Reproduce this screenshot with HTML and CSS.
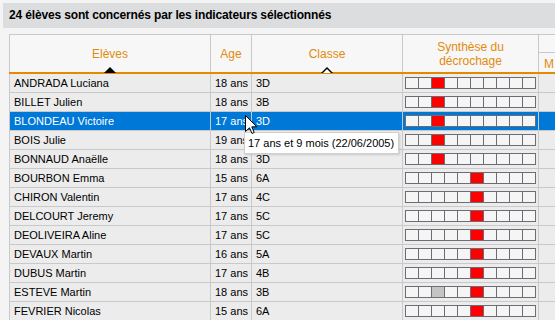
FILE: index.html
```html
<!DOCTYPE html>
<html lang="fr">
<head>
    <meta charset="UTF-8">
    <title>Synthèse du décrochage</title>
    <link rel="stylesheet" href="styles.css">
</head>
<body>

<div class="title-bar">24 élèves sont concernés par les indicateurs sélectionnés</div>

<table class="eleves">
    <colgroup>
        <col class="c-nom">
        <col class="c-age">
        <col class="c-classe">
        <col class="c-synthese">
        <col class="c-suite">
    </colgroup>
    <thead>
        <tr class="head-1">
            <th rowspan="2" class="sorted">Elèves<span class="tri tri-actif"></span></th>
            <th rowspan="2">Age</th>
            <th rowspan="2" class="sorted">Classe<span class="tri"></span></th>
            <th rowspan="2">Synthèse du<br>décrochage</th>
            <th class="groupe"></th>
        </tr>
        <tr class="head-2">
            <th class="sous">M</th>
        </tr>
    </thead>
    <tbody id="table-body"></tbody>
</table>

<div class="tooltip">17 ans et 9 mois (22/06/2005)</div>

<svg class="cursor" width="13" height="20" viewBox="0 0 13 20">
    <path d="M0.5 0.5 V16.5 L4.5 12.8 L7 18.5 L9.2 17.5 L6.8 11.8 H11.8 Z" fill="#fff" stroke="#000" stroke-width="1" stroke-linejoin="miter"/>
</svg>

<script>
// nom, age, classe, case rouge, case grise
const eleves = [
    ['ANDRADA Luciana', 18, '3D', 2],
    ['BILLET Julien', 18, '3B', 2],
    ['BLONDEAU Victoire', 17, '3D', 2],
    ['BOIS Julie', 19, '3D', 2],
    ['BONNAUD Anaëlle', 18, '3D', 2],
    ['BOURBON Emma', 15, '6A', 5],
    ['CHIRON Valentin', 17, '4C', 5],
    ['DELCOURT Jeremy', 17, '5C', 5],
    ['DEOLIVEIRA Aline', 17, '5C', 5],
    ['DEVAUX Martin', 16, '5A', 5],
    ['DUBUS Martin', 17, '4B', 5],
    ['ESTEVE Martin', 18, '3B', 5, 2],
    ['FEVRIER Nicolas', 15, '6A', 5]
];

const tbody = document.getElementById('table-body');
eleves.forEach((e, i) => {
    let cases = '';
    for (let k = 0; k < 10; k++) {
        let cls = 'case';
        if (k === e[3]) cls += ' rouge';
        else if (k === e[4]) cls += ' grise';
        cases += `<span class="${cls}"></span>`;
    }
    const tr = document.createElement('tr');
    if (i === 2) tr.className = 'selected';
    tr.innerHTML = `
        <td class="nom">${e[0]}</td>
        <td>${e[1]} ans</td>
        <td>${e[2]}</td>
        <td class="synthese"><span class="barre">${cases}</span></td>
        <td></td>
    `;
    tbody.appendChild(tr);
});
</script>

</body>
</html>
```

FILE: styles.css
```css
html, body {
    margin: 0;
    overflow: hidden;
}

body {
    background-color: #f4f4f4;
    font-family: "Liberation Sans", Arial, sans-serif;
    color: #000;
}

/* bandeau du haut */
.title-bar {
    margin: 3px 0 0 3px;
    height: 25px;
    line-height: 25px;
    padding-left: 6px;
    background-color: #dcdddf;
    font-size: 12px;
    font-weight: bold;
    letter-spacing: -0.15px;
}

/* tableau des élèves */
.eleves {
    margin: 6px 0 0 9px;
    border-collapse: collapse;
    table-layout: fixed;
    width: 640px;
    border: 1px solid #c9c9c9;
}

.c-nom { width: 201px; }
.c-age { width: 41px; }
.c-classe { width: 151px; }
.c-synthese { width: 136px; }
.c-suite { width: 111px; }

th {
    position: relative;
    background-color: #f7f7f7;
    color: #e38a0c;
    font-weight: normal;
    font-size: 12px;
    line-height: 14px;
    border: 1px solid #c9c9c9;
    border-bottom: 2px solid #e38a00;
    padding: 0;
}

.head-1 th { height: 17px; }
.head-2 th { height: 17px; }

th.groupe {
    border-bottom: 1px solid #c9c9c9;
}

th.sous {
    text-align: left;
    padding-left: 5px;
    padding-top: 2px;
}

/* triangles de tri */
.tri {
    position: absolute;
    left: 50%;
    bottom: -1px;
    margin-left: -6px;
    width: 0;
    height: 0;
    border-left: 6px solid transparent;
    border-right: 6px solid transparent;
    border-bottom: 6px solid #000;
}

.tri::after {
    content: "";
    position: absolute;
    left: -4px;
    top: 1.5px;
    border-left: 4px solid transparent;
    border-right: 4px solid transparent;
    border-bottom: 4px solid #fff;
}

.tri-actif::after {
    display: none;
}

td {
    background-color: #ececec;
    border: 1px solid #c9c9c9;
    font-size: 11px;
    height: 18px;
    line-height: 18px;
    padding: 0 4px;
    white-space: nowrap;
    overflow: hidden;
}

.selected td {
    background-color: #0078d7;
    color: #fff;
}

td.synthese {
    padding: 0 0 0 2px;
}

/* barre de synthèse */
.barre {
    display: inline-flex;
    vertical-align: middle;
    border-left: 1px solid #6c6c74;
    margin-top: -2px;
}

.case {
    width: 12px;
    height: 10px;
    border: 1px solid #6c6c74;
    border-left: none;
    background-color: #f5f5f5;
}

.case.rouge { background-color: #ff0000; }
.case.grise { background-color: #c4c4c4; }

/* infobulle */
.tooltip {
    position: absolute;
    left: 244px;
    top: 132px;
    width: 150px;
    height: 20px;
    line-height: 20px;
    padding-left: 3px;
    background-color: #fff;
    border: 1px solid #cfcfcf;
    box-shadow: 1px 1px 2px rgba(0, 0, 0, 0.15);
    font-size: 11px;
    color: #000;
}

.cursor {
    position: absolute;
    left: 245px;
    top: 115px;
}
```
